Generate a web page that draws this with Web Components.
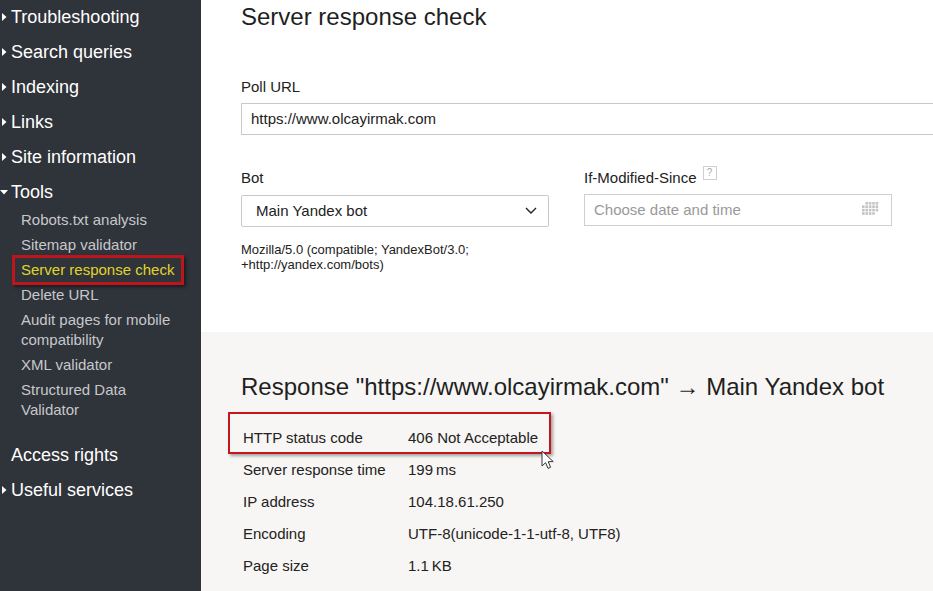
<!DOCTYPE html>
<html>
<head>
<meta charset="utf-8">
<title>Server response check</title>
<style>
  html, body { margin: 0; padding: 0; height: 591px; overflow: hidden; }
  body { font-family: "Liberation Sans", Arial, sans-serif; }
</style>
</head>
<body>
<wm-page>
  <wm-sidenav slot="side">
    <wm-navitem arrow="right">Troubleshooting</wm-navitem>
    <wm-navitem arrow="right">Search queries</wm-navitem>
    <wm-navitem arrow="right">Indexing</wm-navitem>
    <wm-navitem arrow="right">Links</wm-navitem>
    <wm-navitem arrow="right">Site information</wm-navitem>
    <wm-navitem arrow="down">Tools</wm-navitem>
    <wm-subitem>Robots.txt analysis</wm-subitem>
    <wm-subitem>Sitemap validator</wm-subitem>
    <wm-subitem active>Server response check</wm-subitem>
    <wm-subitem>Delete URL</wm-subitem>
    <wm-subitem>Audit pages for mobile compatibility</wm-subitem>
    <wm-subitem>XML validator</wm-subitem>
    <wm-subitem last>Structured Data Validator</wm-subitem>
    <wm-navitem>Access rights</wm-navitem>
    <wm-navitem arrow="right">Useful services</wm-navitem>
  </wm-sidenav>

  <wm-checkform slot="form"></wm-checkform>

  <wm-response slot="result" heading='Response "https://www.olcayirmak.com" → Main Yandex bot'>
    <wm-row name="HTTP status code" marked>406 Not Acceptable</wm-row>
    <wm-row name="Server response time">199&thinsp;ms</wm-row>
    <wm-row name="IP address">104.18.61.250</wm-row>
    <wm-row name="Encoding">UTF-8(unicode-1-1-utf-8, UTF8)</wm-row>
    <wm-row name="Page size">1.1&thinsp;KB</wm-row>
  </wm-response>
</wm-page>

<script>
  (function() {
    class WmPage extends HTMLElement {
      constructor() {
        super();
        this.attachShadow({mode: 'open'}).innerHTML = `
          <style>
            :host { display: grid; grid-template-columns: 201px 732px; width: 933px; height: 591px; overflow: hidden; }
            #side { background: #2f333a; }
            #main { display: flex; flex-direction: column; min-width: 0; }
          </style>
          <div id="side"><slot name="side"></slot></div>
          <div id="main"><slot name="form"></slot><slot name="result"></slot></div>`;
      }
    }

    class WmSidenav extends HTMLElement {
      constructor() {
        super();
        this.attachShadow({mode: 'open'}).innerHTML = `
          <style>:host { display: block; position: relative; }</style>
          <slot></slot>`;
      }
    }

    class WmNavitem extends HTMLElement {
      constructor() {
        super();
        let arrow = '';
        if (this.getAttribute('arrow') == 'right') {
          arrow = '<svg width="5" height="8" viewBox="0 0 5 8"><path d="M0 0l4.5 4L0 8z" fill="#fff"/></svg>';
        } else if (this.getAttribute('arrow') == 'down') {
          arrow = '<svg width="8" height="5" viewBox="0 0 8 5"><path d="M0 0h8L4 4.5z" fill="#fff"/></svg>';
        }
        this.attachShadow({mode: 'open'}).innerHTML = `
          <style>
            :host { display: flex; align-items: center; height: 35px; padding-left: 11px; position: relative;
              color: #fff; font-size: 18px; line-height: 35px; }
            #arrow { position: absolute; left: 2px; top: 0; height: 34px; display: flex; align-items: center; }
            :host([arrow=down]) #arrow { left: 0; }
            svg { display: block; }
          </style>
          <span id="arrow">${arrow}</span><slot></slot>`;
      }
    }

    class WmSubitem extends HTMLElement {
      constructor() {
        super();
        this.attachShadow({mode: 'open'}).innerHTML = `
          <style>
            :host { display: block; padding: 0 20px 0 21px; margin-bottom: 5px; color: #c6c8cb;
              font-size: 15px; line-height: 20px; position: relative; }
            :host([active]) { color: #e0d52c; }
            :host([last]) { margin-bottom: 17.5px; }
            #mark { display: none; position: absolute; left: 12px; top: -5px; width: 166px; height: 24px;
              border: 3px solid #bd151c; box-shadow: 2px 2px 3px rgba(0,0,0,.45); }
            :host([active]) #mark { display: block; }
          </style>
          <slot></slot><span id="mark"></span>`;
      }
    }

    class WmField extends HTMLElement {
      constructor() {
        super();
        this.attachShadow({mode: 'open'}).innerHTML = `
          <style>
            :host { display: block; color: #222; font-size: 15px; }
            #label { line-height: 20px; margin-bottom: var(--label-gap, 6px); }
          </style>
          <div id="label"><slot name="label"></slot></div>
          <slot></slot>`;
      }
    }

    class WmSelect extends HTMLElement {
      constructor() {
        super();
        this.attachShadow({mode: 'open'}).innerHTML = `
          <style>
            :host { display: flex; align-items: center; justify-content: space-between; box-sizing: border-box;
              width: 308px; height: 32px; padding: 0 11px 2px 14px; background: #fff; color: #222;
              border: 1px solid #c9c9c9; border-radius: 2px; font-size: 15px; }
            svg { display: block; }
          </style>
          <slot></slot>
          <svg width="12" height="7" viewBox="0 0 12 7"><path d="M1 1l5 5 5-5" fill="none" stroke="#222" stroke-width="1.4"/></svg>`;
      }
    }

    class WmCheckform extends HTMLElement {
      constructor() {
        super();
        let dots = '';
        // calendar grip, two corner cells are left out
        for (let r = 0; r < 4; r++) {
          for (let c = 0; c < 5; c++) {
            if (r == 3 && c == 4) continue;
            if (r == 0 && c == 0) continue;
            dots += `<rect x="${c * 3.4}" y="${r * 3.4}" width="2.6" height="2.6"/>`;
          }
        }
        this.attachShadow({mode: 'open'}).innerHTML = `
          <style>
            :host { display: block; box-sizing: border-box; height: 332px; padding: 0 0 0 40px; background: #fff; color: #222; }
            h1 { margin: 0; font-size: 24px; font-weight: 400; line-height: 34px; color: #1f1f1f; }
            #url { --label-gap: 6px; margin-top: 43px; }
            #urlbox { display: flex; align-items: center; box-sizing: border-box; width: 720px; height: 32px;
              padding: 0 0 2px 9px; border: 1px solid #c9c9c9; border-right: 0; font-size: 15px; }
            #cols { display: flex; gap: 35px; margin-top: 33px; }
            #bot { width: 308px; --label-gap: 7px; }
            #since { --label-gap: 6px; }
            #ua { margin-top: 15px; font-size: 13px; line-height: 15px; color: #222; white-space: nowrap; }
            #help { display: inline-block; box-sizing: border-box; width: 14px; height: 14px; margin: -4px 0 0 6px;
              border: 1px solid #cfcfcf; color: #aaa; font-size: 10px; line-height: 12px; text-align: center;
              vertical-align: 7px; }
            #datebox { display: flex; align-items: center; justify-content: space-between; box-sizing: border-box;
              width: 308px; height: 32px; padding: 0 10px 2px 9px; border: 1px solid #cfcfcf; color: #999; font-size: 15px; }
            svg { display: block; }
          </style>
          <h1>Server response check</h1>
          <wm-field id="url">
            <span slot="label">Poll URL</span>
            <div id="urlbox">https://www.olcayirmak.com</div>
          </wm-field>
          <div id="cols">
            <div id="bot">
              <wm-field>
                <span slot="label">Bot</span>
                <wm-select>Main Yandex bot</wm-select>
              </wm-field>
              <div id="ua">Mozilla/5.0 (compatible; YandexBot/3.0;<br>+http://yandex.com/bots)</div>
            </div>
            <wm-field id="since">
              <span slot="label">If-Modified-Since<span id="help">?</span></span>
              <div id="datebox">Choose date and time
                <svg width="19" height="14" viewBox="0 0 19 14" fill="#c4c4c4">${dots}</svg>
              </div>
            </wm-field>
          </div>`;
      }
    }

    class WmResponse extends HTMLElement {
      constructor() {
        super();
        this.attachShadow({mode: 'open'}).innerHTML = `
          <style>
            :host { display: block; box-sizing: border-box; height: 259px; padding: 38px 0 0 40px; background: #f7f6f4; color: #222; }
            h2 { margin: 0 0 18px; font-size: 24px; font-weight: 400; line-height: 34px; color: #1f1f1f; white-space: nowrap; }
          </style>
          <h2></h2>
          <slot></slot>`;
        this.shadowRoot.querySelector('h2').textContent = this.getAttribute('heading');
      }
    }

    class WmRow extends HTMLElement {
      constructor() {
        super();
        this.attachShadow({mode: 'open'}).innerHTML = `
          <style>
            :host { display: grid; grid-template-columns: 165px 1fr; height: 32px; padding-left: 2px;
              font-size: 15px; line-height: 32px; position: relative; }
            #mark { display: none; position: absolute; left: -13px; top: -10px; width: 319px; height: 38px;
              border: 2px solid #c4161c; box-shadow: 2px 2px 3px rgba(0,0,0,.35); }
            #cursor { display: none; position: absolute; left: 300px; top: 28px; }
            :host([marked]) #mark, :host([marked]) #cursor { display: block; }
          </style>
          <span id="name"></span><span><slot></slot></span>
          <span id="mark"></span>
          <svg id="cursor" width="14" height="20" viewBox="0 0 14 20">
            <path d="M1 1v15l3.6-3.3L7 18.4l2.6-1.1-2.4-5.6 5-.1z" fill="#fff" stroke="#333" stroke-width="1"/>
          </svg>`;
        this.shadowRoot.querySelector('#name').textContent = this.getAttribute('name');
      }
    }

    customElements.define('wm-page', WmPage);
    customElements.define('wm-sidenav', WmSidenav);
    customElements.define('wm-navitem', WmNavitem);
    customElements.define('wm-subitem', WmSubitem);
    customElements.define('wm-field', WmField);
    customElements.define('wm-select', WmSelect);
    customElements.define('wm-checkform', WmCheckform);
    customElements.define('wm-response', WmResponse);
    customElements.define('wm-row', WmRow);
  })();
</script>
</body>
</html>
